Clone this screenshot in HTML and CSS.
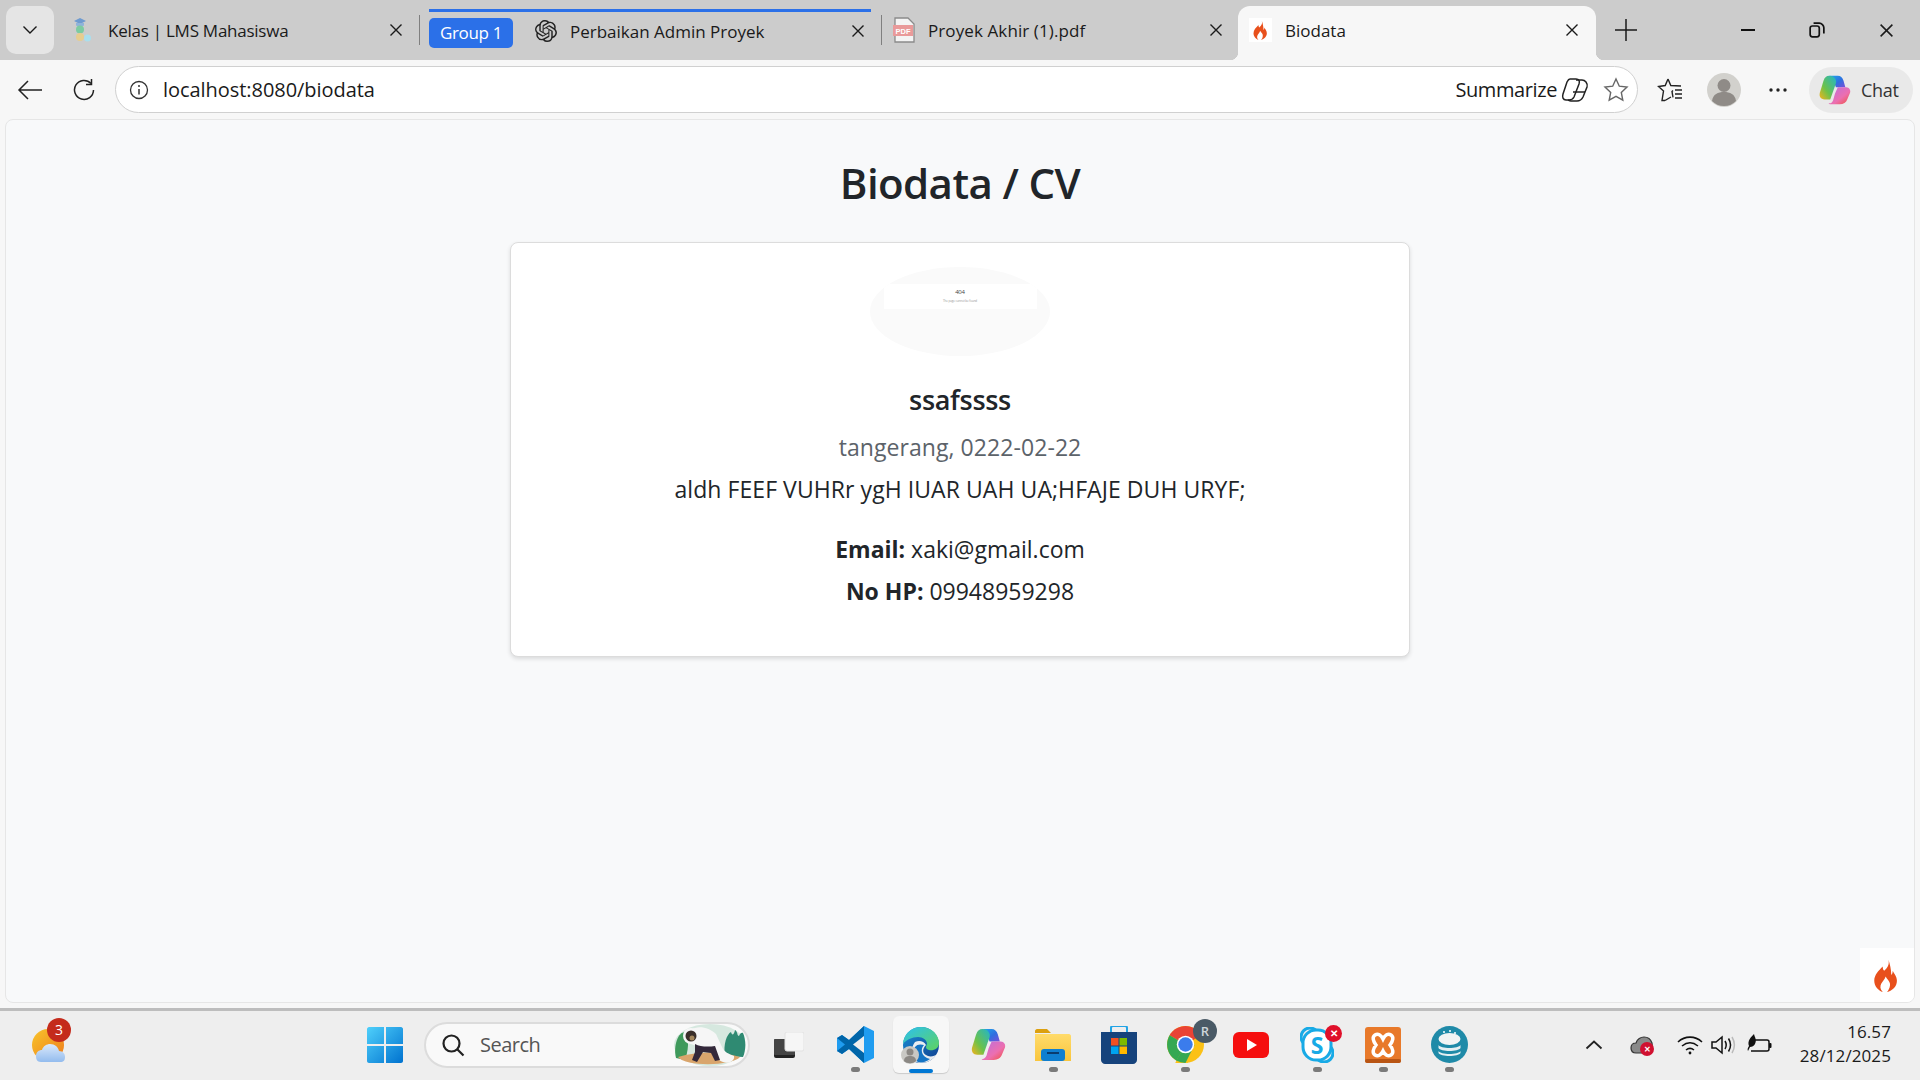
FILE: index.html
```html
<!DOCTYPE html>
<html lang="id">
<head>
    <meta charset="UTF-8">
    <title>Biodata</title>
    <link rel="stylesheet" href="styles.css">
</head>
<body>
    <svg class="sprite" width="0" height="0">
        <defs>
            <symbol id="flame" viewBox="0 0 24 24"><path fill="#e8501c" fill-rule="evenodd" d="M13 1c1 4-1 6-3 8-1-1-1-2-1-3-3 3-6 6-6 10 0 4 3 7 6 8-2-2-2-4-1-6 1-2 2-2 3-5 1 2 4 4 3 7 0 1-1 3-2 4 4-1 7-4 7-8 0-3-2-5-3-7 0 1 0 2-1 3 0-4-1-8-2-11z"/></symbol>
            <symbol id="close" viewBox="0 0 14 14"><path d="M1.5 1.5l11 11M12.5 1.5l-11 11" fill="none" stroke="#1a1a1a" stroke-width="1.4"/></symbol>
            <linearGradient id="cop-a" x1="0" y1="0" x2="1" y2="1"><stop offset="0" stop-color="#1fa8e8"/><stop offset=".55" stop-color="#2f6fe0"/><stop offset="1" stop-color="#7a4fd8"/></linearGradient>
            <linearGradient id="cop-b" x1="0" y1="1" x2="1" y2="0"><stop offset="0" stop-color="#f6b21b"/><stop offset=".4" stop-color="#6cc24a"/><stop offset="1" stop-color="#22b5c9"/></linearGradient>
            <linearGradient id="cop-c" x1="0" y1="0" x2="1" y2="1"><stop offset="0" stop-color="#b86fe0"/><stop offset=".6" stop-color="#ec6fb0"/><stop offset="1" stop-color="#f0503c"/></linearGradient>
            <symbol id="copilot" viewBox="0 0 36 36">
                <path fill="url(#cop-a)" d="M13 3h9c3 0 5 2 6 5l2 7H20l-3-8c-1-2-2-3-4-4z"/>
                <path fill="url(#cop-b)" d="M13 3c-3 0-5 2-6 5L3 21c-1 4 1 7 5 7h6l6-17c1-3-1-8-7-8z"/>
                <path fill="url(#cop-c)" d="M24 33h-10c-2 0-2-1-1-1 2 0 3-1 4-3l2-7 3-7h9c3 0 5 3 4 6l-3 7c-1 3-4 5-8 5z"/>
            </symbol>
        </defs>
    </svg>

    <div class="tabstrip">
        <button class="tab-list">
            <svg width="16" height="10" viewBox="0 0 16 10"><path d="M1.5 1.5L8 8l6.500-6.500" fill="none" stroke="#1a1a1a" stroke-width="1.4"/></svg>
        </button>
        <div class="tab tab-lms">
            <svg class="fav" width="22" height="28" viewBox="0 0 22 28">
                <path d="M8 2l6 3-6 3-6-3z" fill="#6e9bd0"/><path d="M4 7h8v2.500l-4 1.500-4-1.500z" fill="#8fb3da"/>
                <circle cx="8" cy="13.500" r="4" fill="#7ccba2"/><circle cx="8" cy="21" r="4" fill="#e6cd8f"/><circle cx="15.500" cy="22" r="3.500" fill="#a9dfee"/>
            </svg>
            <span class="tab-title">Kelas | LMS Mahasiswa</span>
            <svg class="tab-close"><use href="#close"/></svg>
        </div>
        <span class="tab-sep"></span>
        <div class="tab-group">
            <span class="group-chip">Group 1</span>
            <div class="tab tab-chat">
                <svg class="fav" width="22" height="22" viewBox="0 0 24 24"><path fill="#222" d="M22.2819 9.8211a5.9847 5.9847 0 0 0-.5157-4.9108 6.0462 6.0462 0 0 0-6.5098-2.9A6.0651 6.0651 0 0 0 4.9807 4.1818a5.9847 5.9847 0 0 0-3.9977 2.9 6.0462 6.0462 0 0 0 .7427 7.0966 5.98 5.98 0 0 0 .511 4.9107 6.051 6.051 0 0 0 6.5146 2.9001A5.9847 5.9847 0 0 0 13.2599 24a6.0557 6.0557 0 0 0 5.7718-4.2058 5.9894 5.9894 0 0 0 3.9977-2.9001 6.0557 6.0557 0 0 0-.7475-7.0729zm-9.022 12.6081a4.4755 4.4755 0 0 1-2.8764-1.0408l.1419-.0804 4.7783-2.7582a.7948.7948 0 0 0 .3927-.6813v-6.7369l2.02 1.1686a.071.071 0 0 1 .038.052v5.5826a4.504 4.504 0 0 1-4.4945 4.4944zm-9.6607-4.1254a4.4708 4.4708 0 0 1-.5346-3.0137l.142.0852 4.783 2.7582a.7712.7712 0 0 0 .7806 0l5.8428-3.3685v2.3324a.0804.0804 0 0 1-.0332.0615L9.74 19.9502a4.4992 4.4992 0 0 1-6.1408-1.6464zM2.3408 7.8956a4.485 4.485 0 0 1 2.3655-1.9728V11.6a.7664.7664 0 0 0 .3879.6765l5.8144 3.3543-2.0201 1.1685a.0757.0757 0 0 1-.071 0l-4.8303-2.7865A4.504 4.504 0 0 1 2.3408 7.872zm16.5963 3.8558L13.1038 8.364 15.1192 7.2a.0757.0757 0 0 1 .071 0l4.8303 2.7913a4.4944 4.4944 0 0 1-.6765 8.1042v-5.6772a.79.79 0 0 0-.407-.667zm2.0107-3.0231l-.142-.0852-4.7735-2.7818a.7759.7759 0 0 0-.7854 0L9.409 9.2297V6.8974a.0662.0662 0 0 1 .0284-.0615l4.8303-2.7866a4.4992 4.4992 0 0 1 6.6802 4.66zM8.3065 12.863l-2.02-1.1638a.0804.0804 0 0 1-.038-.0567V6.0742a4.4992 4.4992 0 0 1 7.3757-3.4537l-.142.0805L8.704 5.459a.7948.7948 0 0 0-.3927.6813zm1.0976-2.3654l2.602-1.4998 2.6069 1.4998v2.9994l-2.5974 1.4997-2.6067-1.4997Z"/></svg>
                <span class="tab-title">Perbaikan Admin Proyek</span>
                <svg class="tab-close"><use href="#close"/></svg>
            </div>
        </div>
        <span class="tab-sep"></span>
        <div class="tab tab-pdf">
            <svg class="fav" width="24" height="26" viewBox="0 0 24 26">
                <path d="M3 1h13l6 6v18H3z" fill="#f4f4f4" stroke="#8a8a8a" stroke-width="1.300"/>
                <rect x="1" y="8" width="20" height="11" fill="#e99a9a"/>
                <text x="11" y="17" class="pdf-label">PDF</text>
            </svg>
            <span class="tab-title">Proyek Akhir (1).pdf</span>
            <svg class="tab-close"><use href="#close"/></svg>
        </div>
        <div class="tab tab-active">
            <span class="fav-box"><svg width="20" height="24"><use href="#flame"/></svg></span>
            <span class="tab-title">Biodata</span>
            <svg class="tab-close"><use href="#close"/></svg>
        </div>
        <button class="new-tab">
            <svg width="24" height="24" viewBox="0 0 24 24"><path d="M12 1v22M1 12h22" stroke="#1a1a1a" stroke-width="1.500"/></svg>
        </button>
        <div class="win-controls">
            <svg width="14" height="14" viewBox="0 0 14 14"><path d="M0 7h14" stroke="#111" stroke-width="2"/></svg>
            <svg width="16" height="16" viewBox="0 0 14 14" fill="none" stroke="#111" stroke-width="1.500"><rect x="1" y="3.500" width="8" height="9.500" rx="2"/><path d="M4 1h5c2 0 4 2 4 4v5"/></svg>
            <svg width="15" height="15"><use href="#close"/></svg>
        </div>
    </div>

    <div class="toolbar">
        <svg class="tool-back" width="26" height="20" viewBox="0 0 26 20"><path d="M11 1L2 10l9 9M2 10h23" fill="none" stroke="#222" stroke-width="1.500"/></svg>
        <svg class="tool-reload" width="22" height="22" viewBox="0 0 22 22" fill="none" stroke="#222" stroke-width="1.500"><path d="M18 4.500A9.500 9.500 0 1 0 20.500 11"/><path d="M18.500 0v5.500H13"/></svg>
        <div class="addressbar">
            <svg width="20" height="20" viewBox="0 0 20 20"><circle cx="10" cy="10" r="8.500" fill="none" stroke="#333" stroke-width="1.300"/><path d="M10 9v5.500" stroke="#333" stroke-width="1.500"/><circle cx="10" cy="6" r="1" fill="#333"/></svg>
            <span class="url">localhost:8080/biodata</span>
            <span class="summarize">Summarize</span>
            <svg class="sum-icon" width="28" height="26" viewBox="0 0 28 26" fill="none" stroke="#222" stroke-width="1.500"><path d="M9 2h6c3 0 4 2 3 5l-5 13c-1 2-2 3-5 3H5c-3 0-4-3-3-6L6 5c1-2 2-3 3-3z"/><path d="M15 3h6c3 0 6 3 5 7l-4 10c-1 2-3 4-6 4h-6c-1 0-3-1-3-1"/><path d="M12 15h12"/></svg>
            <svg width="26" height="26" viewBox="0 0 26 26"><path d="M13 2l3.300 7.200 7.700.9-5.700 5.300 1.500 7.700L13 19.300l-6.800 3.800 1.500-7.700L2 10.100l7.700-.9z" fill="none" stroke="#666" stroke-width="1.400"/></svg>
        </div>
        <svg class="tool-favs" width="26" height="26" viewBox="0 0 26 26" fill="none" stroke="#222" stroke-width="1.400"><path d="M11 2l2.800 6.500L24 9M16 13.500l-1 .9 1 6M8 23.500l6-3.500M11 2L8.200 8.500 1.500 9.500l5 4.500L5 23.500l3 0"/><path d="M18 13h7M18 17h7M18 21h7" stroke-width="1.300"/></svg>
        <span class="tool-avatar">
            <svg width="34" height="34" viewBox="0 0 34 34"><circle cx="17" cy="17" r="17" fill="#d2d1cd"/><circle cx="17" cy="12.500" r="6.500" fill="#8f8b87"/><path d="M5 28c1-7 6-9 12-9s11 2 12 9c-3 3-7 5-12 5s-9-2-12-5z" fill="#8f8b87"/></svg>
        </span>
        <svg class="tool-dots" width="20" height="6" viewBox="0 0 20 6"><circle cx="3" cy="3" r="1.700" fill="#222"/><circle cx="10" cy="3" r="1.700" fill="#222"/><circle cx="17" cy="3" r="1.700" fill="#222"/></svg>
        <div class="chat-pill">
            <svg width="34" height="34"><use href="#copilot"/></svg>
            <span>Chat</span>
        </div>
    </div>

    <div class="viewport">
        <div class="page">
            <h1 class="page-title">Biodata / CV</h1>
            <div class="card">
                <div class="avatar">
                    <div class="avatar-404">
                        <span class="err-code">404</span>
                        <span class="err-text">The page cannot be found</span>
                    </div>
                </div>
                <h4 class="name">ssafssss</h4>
                <p class="birth">tangerang, 0222-02-22</p>
                <p class="address">aldh FEEF VUHRr ygH IUAR UAH UA;HFAJE DUH URYF;</p>
                <p class="email"><strong>Email:</strong> xaki@gmail.com</p>
                <p class="phone"><strong>No HP:</strong> 09948959298</p>
            </div>
            <div class="ci-toolbar"><svg width="34" height="34"><use href="#flame"/></svg></div>
        </div>
    </div>

    <div class="taskbar">
        <div class="weather">
            <svg width="48" height="50" viewBox="0 0 48 50">
                <defs>
                    <linearGradient id="sun" x1="0" y1="0" x2="1" y2="1"><stop offset="0" stop-color="#f8c52b"/><stop offset="1" stop-color="#ee7a1c"/></linearGradient>
                    <linearGradient id="cloud" x1="0" y1="0" x2="0" y2="1"><stop offset="0" stop-color="#dbe9fb"/><stop offset="1" stop-color="#93bcee"/></linearGradient>
                </defs>
                <circle cx="18" cy="30" r="16" fill="url(#sun)"/>
                <path transform="translate(5 0)" d="M6 47c-4 0-5-3-5-6 0-4 3-6 6-6 1-4 5-6 8-6 5 0 8 3 9 7 4 0 6 3 6 6 0 3-1 5-5 5z" fill="url(#cloud)"/>
            </svg>
            <span class="weather-badge">3</span>
        </div>

        <svg class="winlogo" width="36" height="36" viewBox="0 0 36 36">
            <defs><linearGradient id="win" x1="0" y1="0" x2="1" y2="1"><stop offset="0" stop-color="#4fd0fb"/><stop offset="1" stop-color="#0072cf"/></linearGradient></defs>
            <path fill="url(#win)" d="M2 0h15v17H0V2c0-1 1-2 2-2zM19 0h15c1 0 2 1 2 2v15H19zM0 19h17v17H2c-1 0-2-1-2-2zM19 19h17v15c0 1-1 2-2 2H19z"/>
        </svg>

        <div class="searchbox">
            <svg width="24" height="24" viewBox="0 0 24 24" fill="none" stroke="#222" stroke-width="2.200"><circle cx="10.500" cy="10.500" r="8"/><path d="M16.500 16.500l6 6"/></svg>
            <span class="search-text">Search</span>
            <svg class="lemur" width="74" height="42" viewBox="0 0 74 42">
                <ellipse cx="37" cy="21" rx="36" ry="21" fill="#d6e8df"/>
                <path d="M3 34C0 22 5 8 12 8c5 6 3 20 0 28z" fill="#3f9a5c"/>
                <path d="M52 32c-2-12 2-22 6-24 1 4 3 3 4-2 3 2 2 6 4 6 1-3 3-4 4-3 3 6 3 18 0 24z" fill="#2f8a72"/>
                <path d="M5 33c20-6 42-6 62 0-8 9-54 10-62 0z" fill="#d9a56c"/>
                <path d="M18 6c6-5 18-3 25 4l6 13c2 5 7 7 12 9 1 5-5 8-11 6-7-2-7-8-9-13l-12-1-11-4z" fill="#f6f6f6"/>
                <path d="M22 20c5 3 14 3 20 2l5 14-5 1-4-8-8-1-6 10-5-2 3-8z" fill="#33283a"/>
                <circle cx="18" cy="12" r="8" fill="#f6f6f6"/><circle cx="18" cy="12" r="5.500" fill="#3a2f2a"/><circle cx="19" cy="14" r="2.500" fill="#a4875c"/>
            </svg>
        </div>

        <div class="task-icons">
            <div class="task-slot no-dot">
                <svg width="30" height="26" viewBox="0 0 30 26"><rect x="0" y="7" width="21" height="19" rx="2" fill="#222"/><rect x="0" y="7" width="21" height="16" rx="1" fill="#444"/><rect x="11" y="0" width="19" height="19" rx="2" fill="#f6f6f6" stroke="#e2e2e2"/></svg>
            </div>
            <div class="task-slot">
                <svg width="37" height="37" viewBox="0 0 37 37">
                    <path d="M27 0l10 5v27l-10 5-15-14-7 5-5-3V12l5-3 7 5z" fill="#1f9cf0"/>
                    <path d="M27 0v37L12 23l-7 5-5-3 8-6.500L0 12l5-3 7 5z" fill="#0065a9"/>
                    <path d="M27 10v17l-11-8.500z" fill="#eeeeee"/>
                </svg>
            </div>
            <div class="task-slot active">
                <svg width="40" height="38" viewBox="0 0 40 38">
                    <defs>
                        <linearGradient id="edge-a" x1="0" y1="0" x2="1" y2="1"><stop offset="0" stop-color="#2bc0ef"/><stop offset="1" stop-color="#5fd35f"/></linearGradient>
                        <linearGradient id="edge-b" x1="0" y1="0" x2="1" y2="1"><stop offset="0" stop-color="#1b8ed6"/><stop offset="1" stop-color="#0f3f8f"/></linearGradient>
                    </defs>
                    <circle cx="20" cy="19" r="18" fill="url(#edge-b)"/>
                    <path d="M2 18C3 7 11 1 20 1c11 0 18 8 18 16 0 6-6 8-10 7-4-1-3-4-2-6 0-4-4-7-9-7-6 0-12 3-15 7z" fill="url(#edge-a)"/>
                    <path d="M14 16c4-2 9-1 11 3-4 4-4 9 2 11 3 1 7 0 9-2-4 6-10 9-16 9-3 0-5-1-7-3-3-5-3-13 1-18z" fill="#f4f4f4" opacity=".95"/>
                    <path d="M17 36c-5-3-6-10-3-15 2-3 6-3 9-2-4 4-3 12 6 14-4 3-8 4-12 3z" fill="#1574c4"/>
                    <circle cx="9" cy="29" r="9" fill="#c9c8c4"/><circle cx="9" cy="26" r="3.500" fill="#8b8884"/><path d="M3 35c0-4 3-5 6-5s6 1 6 5c-3 3-9 3-12 0z" fill="#8b8884"/>
                </svg>
            </div>
            <div class="task-slot no-dot">
                <svg width="37" height="37"><use href="#copilot"/></svg>
            </div>
            <div class="task-slot">
                <svg width="36" height="32" viewBox="0 0 36 32">
                    <defs><linearGradient id="folder" x1="0" y1="0" x2="0" y2="1"><stop offset="0" stop-color="#ffdb6b"/><stop offset="1" stop-color="#f9c53c"/></linearGradient></defs>
                    <path d="M0 2c0-1 1-2 2-2h10l4 4H0z" fill="#dca00f"/>
                    <path d="M0 5h34c1 0 2 1 2 2v25H0z" fill="url(#folder)"/>
                    <rect x="6" y="20" width="24" height="12" rx="3" fill="#0f7fd0"/>
                    <rect x="12" y="23" width="12" height="2" fill="#0a3c6e"/>
                </svg>
            </div>
            <div class="task-slot no-dot">
                <svg width="36" height="38" viewBox="0 0 36 38">
                    <path d="M10 6V2c0-1 1-2 2-2h12c1 0 2 1 2 2v4" fill="none" stroke="#22a4e6" stroke-width="2"/>
                    <path d="M0 6h36v28c0 2-2 4-4 4H4c-2 0-4-2-4-4z" fill="#16437c"/>
                    <rect x="10" y="12" width="7.500" height="7.500" fill="#f25022"/><rect x="18.500" y="12" width="7.500" height="7.500" fill="#7fba00"/>
                    <rect x="10" y="20.500" width="7.500" height="7.500" fill="#00a4ef"/><rect x="18.500" y="20.500" width="7.500" height="7.500" fill="#ffb900"/>
                </svg>
            </div>
            <div class="task-slot">
                <svg class="chrome" width="37" height="37" viewBox="0 0 36 36">
                    <circle cx="18" cy="18" r="18" fill="#fbc116"/>
                    <path d="M18 18L2.500 9A18 18 0 0 1 33.600 9L18 18z" fill="#ea4335"/>
                    <path d="M18 18L2.500 9A18 18 0 0 0 18 36z" fill="#34a853"/>
                    <path d="M18 18L8 36h12l13.600-27z" fill="#fbc116"/>
                    <path d="M18 18l-9 15.600A18 18 0 0 0 18 36l9-18z" fill="#34a853"/>
                    <circle cx="18" cy="18" r="8.500" fill="#fff"/><circle cx="18" cy="18" r="7" fill="#3b7cec"/>
                </svg>
                <span class="profile-badge">R</span>
            </div>
            <div class="task-slot no-dot">
                <svg width="36" height="26" viewBox="0 0 36 26"><rect width="36" height="26" rx="6" fill="#f50f0f"/><path d="M14 7l10 6-10 6z" fill="#fff"/></svg>
            </div>
            <div class="task-slot">
                <svg width="34" height="36" viewBox="0 0 34 36">
                    <circle cx="10" cy="10" r="9" fill="none" stroke="#18aae6" stroke-width="3"/><circle cx="24" cy="26" r="9" fill="none" stroke="#18aae6" stroke-width="3"/>
                    <rect x="3" y="3" width="28" height="30" rx="13" fill="#fff" stroke="#18aae6" stroke-width="3"/>
                    <text x="17" y="27" class="skype-s">S</text>
                </svg>
                <span class="skype-badge">✕</span>
            </div>
            <div class="task-slot">
                <svg width="36" height="36" viewBox="0 0 36 36">
                    <rect width="36" height="36" rx="3" fill="#e8792a"/><rect x="0" y="32" width="36" height="4" rx="2" fill="#b95514"/>
                    <path d="M10 8c3-2 6 0 8 4 2-4 5-6 8-4 3 2 2 6-1 10 3 4 4 8 1 10-3 2-6 0-8-4-2 4-5 6-8 4-3-2-2-6 1-10-3-4-4-8-1-10z" fill="none" stroke="#fff" stroke-width="3.500"/>
                </svg>
            </div>
            <div class="task-slot">
                <svg width="37" height="37" viewBox="0 0 37 37">
                    <circle cx="18.500" cy="18.500" r="18.500" fill="#1f8aa8"/>
                    <ellipse cx="18.500" cy="13" rx="11" ry="6" fill="#f2f4f4"/>
                    <path d="M7.500 19c2 4 20 4 22 0v3c-2 4-20 4-22 0zM7.500 25c2 4 20 4 22 0v2c-2 4-20 4-22 0z" fill="#e5eff2"/>
                    <circle cx="13" cy="6" r="1" fill="#fff"/><circle cx="19" cy="5" r="1" fill="#fff"/><circle cx="24" cy="7" r="1" fill="#fff"/>
                </svg>
            </div>
        </div>

        <div class="tray">
            <svg class="tray-caret" width="18" height="10" viewBox="0 0 18 10"><path d="M1.500 8.500L9 1.500l7.500 7" fill="none" stroke="#222" stroke-width="1.800"/></svg>
            <span class="tray-cloud">
                <svg width="24" height="18" viewBox="0 0 24 18"><path d="M6 17c-3 0-5-2-5-5s2-5 5-5c1-4 5-6 8-6 4 0 7 3 8 6 1 4-1 10-4 10z" fill="#8a8a8a" stroke="#333" stroke-width="1.200"/></svg>
                <span class="cloud-badge">✕</span>
            </span>
            <svg class="tray-wifi" width="26" height="20" viewBox="0 0 26 20" fill="none" stroke="#111" stroke-width="1.600"><path d="M1 7c7-6.500 17-6.500 24 0M5 11c5-4 11-4 16 0M9 15c2.500-2 5.500-2 8 0"/><circle cx="13" cy="18" r="1.400" fill="#111" stroke="none"/></svg>
            <svg class="tray-sound" width="26" height="20" viewBox="0 0 26 20" fill="none" stroke="#111" stroke-width="1.500"><path d="M1 7v6h4l6 5V2L5 7z"/><path d="M14 6c1.500 2.500 1.500 5.500 0 8M17.500 3.500c2.500 4 2.500 9 0 13"/><path d="M21 2c3 5 3 11 0 16" stroke="#bbb"/></svg>
            <svg class="tray-battery" width="26" height="22" viewBox="0 0 26 22"><path d="M8 6h13c1 0 2 1 2 2v7c0 1-1 2-2 2H5" fill="none" stroke="#111" stroke-width="1.500"/><rect x="23" y="9" width="2.500" height="5" rx="1" fill="#111"/><path d="M8 0c1 4 3 6 1 10-1 2-3 3-5 3l-2 4c-1-2 0-3 1-5-2-5 2-9 5-12z" fill="#111"/></svg>
            <div class="clock">
                <span>16.57</span>
                <span>28/12/2025</span>
            </div>
        </div>
    </div>
</body>
</html>
```

FILE: styles.css
```css
* {
    box-sizing: border-box;
}
html, body {
    margin: 0;
    height: 100%;
}
body {
    font-family: "Open Sans", "Noto Sans", sans-serif;
    color: #212529;
    background-color: #f7f7f7;
    display: flex;
    flex-direction: column;
    height: 1080px;
    overflow: hidden;
}
button {
    border: none;
    background: none;
    padding: 0;
}
.sprite {
    position: absolute;
}

/* tabs */
.tabstrip {
    height: 60px;
    background-color: #cccccc;
    display: flex;
    align-items: stretch;
    padding-top: 6px;
    padding-left: 6px;
    font-size: 17px;
    letter-spacing: 0;
    color: #1a1a1a;
}
.tab-list {
    width: 48px;
    height: 48px;
    background-color: #e5e5e5;
    border-radius: 10px;
    display: flex;
    align-items: center;
    justify-content: center;
}
.tab {
    display: flex;
    align-items: center;
    height: 48px;
}
.tab-title {
    white-space: nowrap;
}
.tab-close {
    width: 14px;
    height: 14px;
    margin-left: auto;
}
.tab-lms {
    width: 365px;
    padding-left: 18px;
    padding-right: 16px;
}
.tab-lms .tab-title {
    margin-left: 14px;
    letter-spacing: -0.25px;
}
.tab-sep {
    width: 1px;
    height: 30px;
    margin-top: 9px;
    background-color: #7f7f7f;
}
.tab-group {
    width: 442px;
    margin-left: 9px;
    margin-right: 10px;
    margin-top: 3px;
    border-top: 3px solid #2b70e8;
    display: flex;
    height: 45px;
}
.group-chip {
    width: 84px;
    height: 30px;
    margin-top: 6px;
    padding-bottom: 2px;
    background-color: #2b70e8;
    color: #fff;
    border-radius: 5px;
    display: flex;
    align-items: center;
    justify-content: center;
    letter-spacing: -0.35px;
}
.tab-chat {
    flex: 1;
    height: 38px;
    padding-left: 22px;
    padding-right: 6px;
}
.tab-chat .tab-title {
    margin-left: 13px;
}
.tab-pdf {
    width: 356px;
    padding-left: 10px;
    padding-right: 15px;
}
.tab-pdf .tab-title {
    margin-left: 12px;
    letter-spacing: 0.1px;
}
.tab-active {
    position: relative;
    width: 358px;
    height: 54px;
    background-color: #f7f7f7;
    border-radius: 12px 12px 0 0;
    padding-left: 11px;
    padding-right: 17px;
    padding-bottom: 6px;
}
.tab-active::before, .tab-active::after {
    content: "";
    position: absolute;
    bottom: 0;
    width: 8px;
    height: 8px;
}
.tab-active::before {
    left: -8px;
    background: radial-gradient(circle at 0 0, transparent 8px, #f7f7f7 8.5px);
}
.tab-active::after {
    right: -8px;
    background: radial-gradient(circle at 100% 0, transparent 8px, #f7f7f7 8.5px);
}
.fav-box {
    width: 23px;
    height: 24px;
    background-color: #fff;
    display: flex;
    align-items: center;
    justify-content: center;
}
.tab-active .tab-title {
    margin-left: 13px;
}
.new-tab {
    width: 60px;
    height: 48px;
    display: flex;
    align-items: center;
    justify-content: center;
}
.win-controls {
    margin-left: auto;
    width: 179px;
    height: 48px;
    padding-right: 26px;
    display: flex;
    align-items: center;
    justify-content: space-between;
}
.pdf-label {
    font-family: "Liberation Sans", sans-serif;
    font-size: 7.500px;
    font-weight: 700;
    fill: #fff;
    text-anchor: middle;
    letter-spacing: 0;
}

/* toolbar */
.toolbar {
    height: 58px;
    display: flex;
    align-items: center;
    padding-left: 17px;
    padding-top: 1px;
}
.tool-reload {
    margin-left: 30px;
}
.addressbar {
    width: 1523px;
    height: 47px;
    margin-left: 20px;
    background-color: #fff;
    border: 1.500px solid #d0d0d0;
    border-radius: 24px;
    display: flex;
    align-items: center;
    padding-left: 13px;
    padding-right: 8px;
    font-size: 20px;
}
.url {
    margin-left: 14px;
    color: #1a1a1a;
    letter-spacing: -0.05px;
}
.summarize {
    margin-left: auto;
    color: #1a1a1a;
    letter-spacing: -0.4px;
}
.sum-icon {
    margin-left: 4px;
    margin-right: 14px;
}
.tool-favs {
    margin-left: 19px;
}
.tool-avatar {
    margin-left: 24px;
    display: flex;
}
.tool-dots {
    margin-left: 27px;
}
.chat-pill {
    width: 104px;
    height: 46px;
    margin-left: 21px;
    background-color: #e9e9e9;
    border-radius: 23px;
    display: flex;
    align-items: center;
    padding-left: 8px;
    gap: 10px;
    font-size: 18px;
    letter-spacing: -0.3px;
    color: #333;
}

/* page */
.viewport {
    flex: 1;
    padding: 1px 5px 5px;
    min-height: 0;
}
.page {
    position: relative;
    height: 100%;
    background-color: #f8f9fa;
    border: 1px solid #e6e6e6;
    border-radius: 8px;
    overflow: hidden;
    padding-top: 39px;
}
.page-title {
    margin: 0 0 35px;
    font-size: 42px;
    line-height: 48px;
    font-weight: 600;
    text-align: center;
    letter-spacing: -0.6px;
}
.card {
    width: 900px;
    height: 415px;
    margin: 0 auto;
    background-color: #fff;
    border: 1px solid #dcdcdc;
    border-radius: 8px;
    box-shadow: 0 2px 4px rgba(0, 0, 0, 0.12);
    padding-top: 24px;
    text-align: center;
}
.avatar {
    width: 180px;
    height: 89px;
    margin: 0 auto;
    background-color: #fafafa;
    border-radius: 50%;
    overflow: hidden;
    padding-top: 17px;
}
.avatar-404 {
    width: 153px;
    height: 25px;
    margin: 0 auto;
    background-color: #fff;
    display: flex;
    flex-direction: column;
    align-items: center;
    padding-top: 4px;
}
.err-code {
    font-size: 6px;
    line-height: 8px;
    letter-spacing: -0.2px;
    color: #444;
}
.err-text {
    margin-top: 3px;
    font-size: 3px;
    line-height: 5px;
    letter-spacing: -0.1px;
    color: #999;
}
.name {
    margin: 29px 0 18px;
    font-size: 27px;
    line-height: 29px;
    font-weight: 600;
    letter-spacing: -0.3px;
}
.card p {
    margin: 0;
    font-size: 23px;
    line-height: 30px;
    letter-spacing: 0.07px;
}
.card .birth {
    color: #5c636a;
}
.card .address {
    margin-top: 12px;
}
.card .email {
    margin-top: 30px;
    letter-spacing: 0;
}
.card .phone {
    margin-top: 12px;
    letter-spacing: 0;
}
.card strong {
    font-weight: 700;
}
.ci-toolbar {
    position: absolute;
    right: 0;
    bottom: 0;
    width: 54px;
    height: 54px;
    background-color: #fff;
    display: flex;
    align-items: center;
    justify-content: center;
}

/* taskbar */
.taskbar {
    height: 72px;
    background-color: #eeeeee;
    border-top: 3px solid #bdbdbd;
    padding-bottom: 2px;
    display: flex;
    align-items: center;
    flex-shrink: 0;
}
.weather {
    position: relative;
    width: 60px;
    margin-left: 30px;
    margin-top: -9px;
    display: flex;
}
.weather-badge {
    position: absolute;
    left: 17px;
    top: 3px;
    width: 24px;
    height: 24px;
    border-radius: 50%;
    background-color: #c42b1c;
    color: #fff;
    font-size: 14px;
    text-align: center;
    line-height: 24px;
}
.winlogo {
    margin-left: 277px;
}
.searchbox {
    width: 326px;
    height: 46px;
    margin-left: 21px;
    background-color: #f9f9f9;
    border: 2px solid #dcdcdc;
    border-radius: 23px;
    display: flex;
    align-items: center;
    padding-left: 15px;
    padding-right: 1px;
}
.search-text {
    margin-left: 15px;
    font-size: 20px;
    letter-spacing: -0.5px;
    color: #555;
}
.lemur {
    margin-left: auto;
}
.task-icons {
    display: flex;
    margin-left: 6px;
}
.task-slot {
    position: relative;
    width: 66px;
    height: 67px;
    display: flex;
    align-items: center;
    justify-content: center;
}
.task-slot::after {
    content: "";
    position: absolute;
    left: 29px;
    bottom: 6px;
    width: 9px;
    height: 5px;
    border-radius: 3px;
    background-color: #7a7a7a;
}
.task-slot.no-dot::after {
    display: none;
}
.task-slot.active::before {
    content: "";
    position: absolute;
    left: 5px;
    right: 5px;
    top: 5px;
    bottom: 5px;
    background-color: #f7f7f7;
    border-radius: 6px;
    box-shadow: 0 1px 1px rgba(0, 0, 0, 0.15);
}
.task-slot.active svg {
    position: relative;
}
.task-slot.active::after {
    left: 21px;
    bottom: 5px;
    width: 24px;
    height: 4px;
    background-color: #0078d4;
}
.profile-badge {
    position: absolute;
    left: 41px;
    top: 8px;
    width: 24px;
    height: 24px;
    border-radius: 50%;
    background-color: #4a5a66;
    color: #cfd5da;
    font-size: 13px;
    font-weight: 600;
    text-align: center;
    line-height: 24px;
}
.skype-s {
    font-family: "Open Sans", sans-serif;
    font-size: 23px;
    font-weight: 700;
    fill: #18aae6;
    text-anchor: middle;
}
.skype-badge {
    position: absolute;
    left: 41px;
    top: 14px;
    width: 17px;
    height: 17px;
    border-radius: 50%;
    background-color: #e0102a;
    color: #fff;
    font-size: 10px;
    font-weight: 700;
    text-align: center;
    line-height: 17px;
}
.tray {
    margin-left: auto;
    display: flex;
    align-items: center;
    padding-right: 29px;
}
.tray-cloud {
    position: relative;
    display: flex;
    margin-left: 27px;
}
.cloud-badge {
    position: absolute;
    left: 10px;
    top: 6px;
    width: 14px;
    height: 14px;
    border-radius: 50%;
    background-color: #d01030;
    color: #fff;
    font-size: 8px;
    font-weight: 700;
    text-align: center;
    line-height: 14px;
}
.tray-wifi {
    margin-left: 23px;
}
.tray-sound {
    margin-left: 8px;
}
.tray-battery {
    margin-left: 9px;
}
.clock {
    margin-left: 14px;
    width: 105px;
    display: flex;
    flex-direction: column;
    align-items: flex-end;
    margin-top: -1px;
    font-size: 17px;
    line-height: 24px;
    letter-spacing: 0.1px;
    color: #1a1a1a;
}
```
